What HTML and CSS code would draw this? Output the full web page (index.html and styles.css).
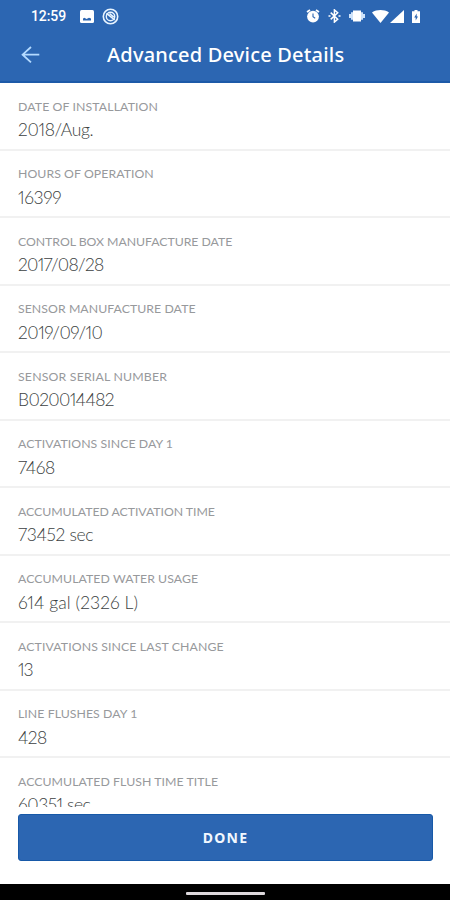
FILE: index.html
```html
<!DOCTYPE html>
<html lang="en">
<head>
<meta charset="utf-8">
<title>Advanced Device Details</title>
<link rel="stylesheet" href="styles.css">
</head>
<body>
<div class="screen">
  <header class="top">
    <div class="status">
      <span class="clock">12:59</span>
      <svg class="photo" width="14" height="13" viewBox="0 0 14 13"><rect width="14" height="13" rx="1.5" fill="#fff"/><path d="M3 10.4V8.6l1.5-.8 2 1.2L9 7.8l2 .8v1.8z" fill="#2c66b2"/></svg>
      <svg class="ring" width="17" height="17" viewBox="0 0 17 17" fill="none" stroke="#e8f4ff"><circle cx="8.5" cy="8.5" r="7.2" stroke-width="1.6"/><circle cx="8.5" cy="8.5" r="4.2" stroke-width="1.4"/><path d="m4.5 5.3 8.2 6.7M7.5 5.5l4.3 3.7" stroke-width="1.6"/></svg>
      <span class="spacer"></span>
      <svg class="alarm" width="14" height="14" viewBox="0 0 14 14"><path d="m1 3 3-2M13 3l-3-2" stroke="#fff" stroke-width="1.8"/><circle cx="7" cy="7.6" r="5.9" fill="#fff"/><path d="M7 4.5v3.3l2.2 1.4" fill="none" stroke="#2c66b2" stroke-width="1.1"/></svg>
      <svg class="bt" width="13" height="14" viewBox="0 0 13 14" fill="none" stroke="#fff" stroke-width="1.5"><path d="m2.7 3.6 7 6.6-3.3 2.9V.9l3.3 2.9-7 6.6"/><path d="M.5 7h2M10.5 7h2"/></svg>
      <svg class="vibe" width="16" height="12" viewBox="0 0 16 12"><path d="M4 .5h8v11H4z" fill="#fff"/><path d="M3 2.3v7.4M13 2.3v7.4M1 4v4M15 4v4" stroke="#cfe3fa" stroke-width="2"/></svg>
      <svg class="wifi" width="17" height="13" viewBox="0 0 17 13"><path d="M0 2.5C5-.7 12-.7 17 2.5L8.5 13z" fill="#fff"/></svg>
      <svg class="signal" width="14" height="13" viewBox="0 0 14 13"><path d="M14 0v13H0z" fill="#fff"/></svg>
      <svg class="battery" width="8" height="13" viewBox="0 0 8 13"><path d="M2.5 0h3v1.2H8V13H0V1.2h2.5z" fill="#fff"/><path d="M4.7 3.5 2.2 7.6h1.5v3l2.3-4.1H4.7z" fill="#2c66b2"/></svg>
    </div>
    <div class="bar">
      <svg class="back" width="20" height="18" viewBox="0 0 20 18" fill="none" stroke="#b4daff" stroke-width="1.8"><path d="M18.3 8.7H1.6M10 1 1.6 8.7l8.4 7.6"/></svg>
      <h1>Advanced Device Details</h1>
    </div>
  </header>
  <main class="list">
    <section class="installed"><h2>DATE OF INSTALLATION</h2><p>2018/Aug.</p></section>
    <section class="hours"><h2>HOURS OF OPERATION</h2><p>16399</p></section>
    <section class="control-date"><h2>CONTROL BOX MANUFACTURE DATE</h2><p>2017/08/28</p></section>
    <section class="sensor-date"><h2>SENSOR MANUFACTURE DATE</h2><p>2019/09/10</p></section>
    <section class="serial"><h2>SENSOR SERIAL NUMBER</h2><p>B020014482</p></section>
    <section class="activations"><h2>ACTIVATIONS SINCE DAY 1</h2><p>7468</p></section>
    <section class="active-time"><h2>ACCUMULATED ACTIVATION TIME</h2><p>73452 sec</p></section>
    <section class="water"><h2>ACCUMULATED WATER USAGE</h2><p>614 gal (2326 L)</p></section>
    <section class="last-change"><h2>ACTIVATIONS SINCE LAST CHANGE</h2><p>13</p></section>
    <section class="flushes"><h2>LINE FLUSHES DAY 1</h2><p>428</p></section>
    <section class="flush-time"><h2>ACCUMULATED FLUSH TIME TITLE</h2><p>60351 sec</p></section>
  </main>
  <footer class="actions"><button>DONE</button></footer>
  <div class="nav"><span></span></div>
</div>
</body>
</html>
```
FILE: styles.css
```css
* { box-sizing: border-box; }
body { margin: 0; background: #fff; font-family: Lato, sans-serif; }
.screen { width: 450px; height: 900px; display: flex; flex-direction: column; overflow: hidden; }
.top { height: 83px; flex: none; background: #2c66b2; border-bottom: 2px solid #1d5aa8; color: #fff; }
.status { height: 32px; display: flex; align-items: center; padding: 0 30px 0 31px; }
.status svg { flex: none; }
.clock { width: 36px; font: 500 14px/32px Roboto, sans-serif; letter-spacing: -0.1px; }
.photo { margin-left: 13px; }
.ring { margin-left: 8px; }
.spacer { flex: 1; }
.bt { margin-left: 8px; }
.vibe { margin-left: 8px; }
.wifi { margin-left: 7px; }
.signal { margin-left: 1px; }
.battery { margin-left: 8px; }
.bar { height: 45px; display: grid; grid-template-columns: 86px 1fr; align-items: center; }
.back { margin-left: 21px; }
h1 { margin: 0; padding-left: 21px; font: 500 20px/45px "Noto Sans", sans-serif; letter-spacing: 0.2px; white-space: nowrap; }
.list { height: 724px; flex: none; overflow: hidden; }
section { height: 67.5px; padding: 14.5px 18px 0; border-bottom: 2px solid #f1f1f1; }
h2 { margin: 0; font-weight: 400; font-size: 12.3px; line-height: 17px; letter-spacing: 0.05px; color: #97999c; white-space: nowrap; }
p { margin: 4.5px 0 0; font-weight: 300; font-size: 17.5px; line-height: 22px; color: #3c3f42; white-space: nowrap; font-variant-numeric: proportional-nums; }
.installed h2 { letter-spacing: 0.1px; }
.installed p { letter-spacing: -0.35px; }
.hours p { letter-spacing: -0.35px; }
.control-date h2 { letter-spacing: -0.05px; }
.control-date p { letter-spacing: -0.7px; }
.sensor-date p { letter-spacing: -0.5px; }
.serial h2 { letter-spacing: 0.18px; }
.serial p { letter-spacing: -0.65px; }
.activations p { letter-spacing: -0.5px; }
.active-time h2 { letter-spacing: -0.05px; }
.active-time p { letter-spacing: -0.35px; }
.water p { letter-spacing: 0.07px; }
.last-change h2 { letter-spacing: 0.11px; }
.last-change p { letter-spacing: -1.2px; }
.flushes p { letter-spacing: -0.5px; }
.flush-time p { letter-spacing: -0.45px; }
.actions { height: 77px; flex: none; padding: 7px 17px 0 18px; }
button { display: block; width: 100%; height: 46.5px; padding: 1px 0 0; border: 1px solid #1759a8; border-radius: 3px; background: #2c66b2; color: #f2f8ff; font: 700 14px/44px "Noto Sans", sans-serif; letter-spacing: 1.3px; }
.nav { flex: 1; background: #000; display: flex; justify-content: center; padding-top: 8px; }
.nav span { width: 79px; height: 3px; border-radius: 1px; background: #ddd8dc; }
```
